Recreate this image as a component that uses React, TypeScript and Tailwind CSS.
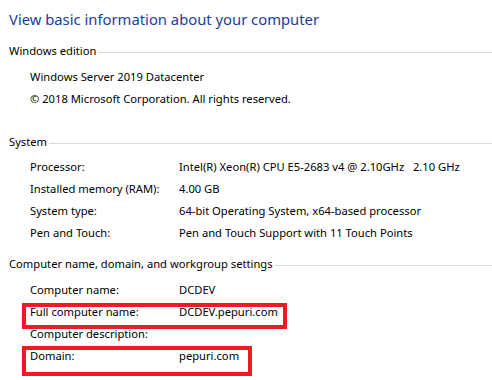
const sections = [
  {
    title: 'Windows edition',
    rows: [
      { label: 'Windows Server 2019 Datacenter' },
      { label: '© 2018 Microsoft Corporation. All rights reserved.' },
    ],
  },
  {
    title: 'System',
    rows: [
      { label: 'Processor:', value: 'Intel(R) Xeon(R) CPU E5-2683 v4 @ 2.10GHz   2.10 GHz' },
      { label: 'Installed memory (RAM):', value: '4.00 GB' },
      { label: 'System type:', value: '64-bit Operating System, x64-based processor' },
      { label: 'Pen and Touch:', value: 'Pen and Touch Support with 11 Touch Points' },
    ],
  },
  {
    title: 'Computer name, domain, and workgroup settings',
    rows: [
      { label: 'Computer name:', value: 'DCDEV' },
      { label: 'Full computer name:', value: 'DCDEV.pepuri.com', box: 'full' },
      { label: 'Computer description:', value: '' },
      { label: 'Domain:', value: 'pepuri.com', box: 'domain' },
    ],
  },
];

type Row = { label: string; value?: string; box?: string };

const InfoRow = ({ row }: { row: Row }) => (
  <div className="relative flex h-[22px] leading-[22px] pl-[30px] whitespace-pre">
    {row.value !== undefined ? (
      <>
        <span className="w-[149px] shrink-0">{row.label}</span>
        <span>{row.value}</span>
      </>
    ) : (
      <span>{row.label}</span>
    )}
    {/* red highlight boxes drawn over the rows */}
    {row.box === 'full' && (
      <div className="absolute left-[22px] top-[2px] w-[265px] h-[26px] border-4 border-[#ed1c24]" />
    )}
    {row.box === 'domain' && (
      <div className="absolute left-[22px] top-[1px] w-[230px] h-[30px] border-4 border-[#ed1c24]" />
    )}
  </div>
);

const SectionHead = ({ title }: { title: string }) => (
  <div className="flex items-start h-[22px] leading-[22px] pl-[9px]">
    <span className="whitespace-nowrap">{title}</span>
    <div className="flex-1 h-px mt-[12px] ml-[2px] bg-[#d9d9d9]" />
  </div>
);

export default function App() {
  return (
    <div
      className="w-[492px] h-[380px] overflow-hidden bg-white text-[11.2px] text-[#000000]"
      style={{ fontFamily: '"Segoe UI", "Noto Sans", sans-serif' }}
    >
      <h1 className="pt-[7px] pl-[9px] text-[14.8px] leading-[24px] text-[#1e3c9c] whitespace-nowrap">
        View basic information about your computer
      </h1>

      {/* Windows edition */}
      <div className="mt-[9px]">
        <SectionHead title={sections[0].title} />
        <div className="mt-[4px]">
          {sections[0].rows.map((r) => (
            <InfoRow key={r.label} row={r} />
          ))}
        </div>
      </div>

      {/* System */}
      <div className="mt-[21px]">
        <SectionHead title={sections[1].title} />
        <div className="mt-[3px]">
          {sections[1].rows.map((r) => (
            <InfoRow key={r.label} row={r} />
          ))}
        </div>
      </div>

      {/* Computer name */}
      <div className="mt-[9px]">
        <SectionHead title={sections[2].title} />
        <div className="mt-[4px]">
          {sections[2].rows.map((r) => (
            <InfoRow key={r.label} row={r} />
          ))}
        </div>
      </div>
    </div>
  );
}
